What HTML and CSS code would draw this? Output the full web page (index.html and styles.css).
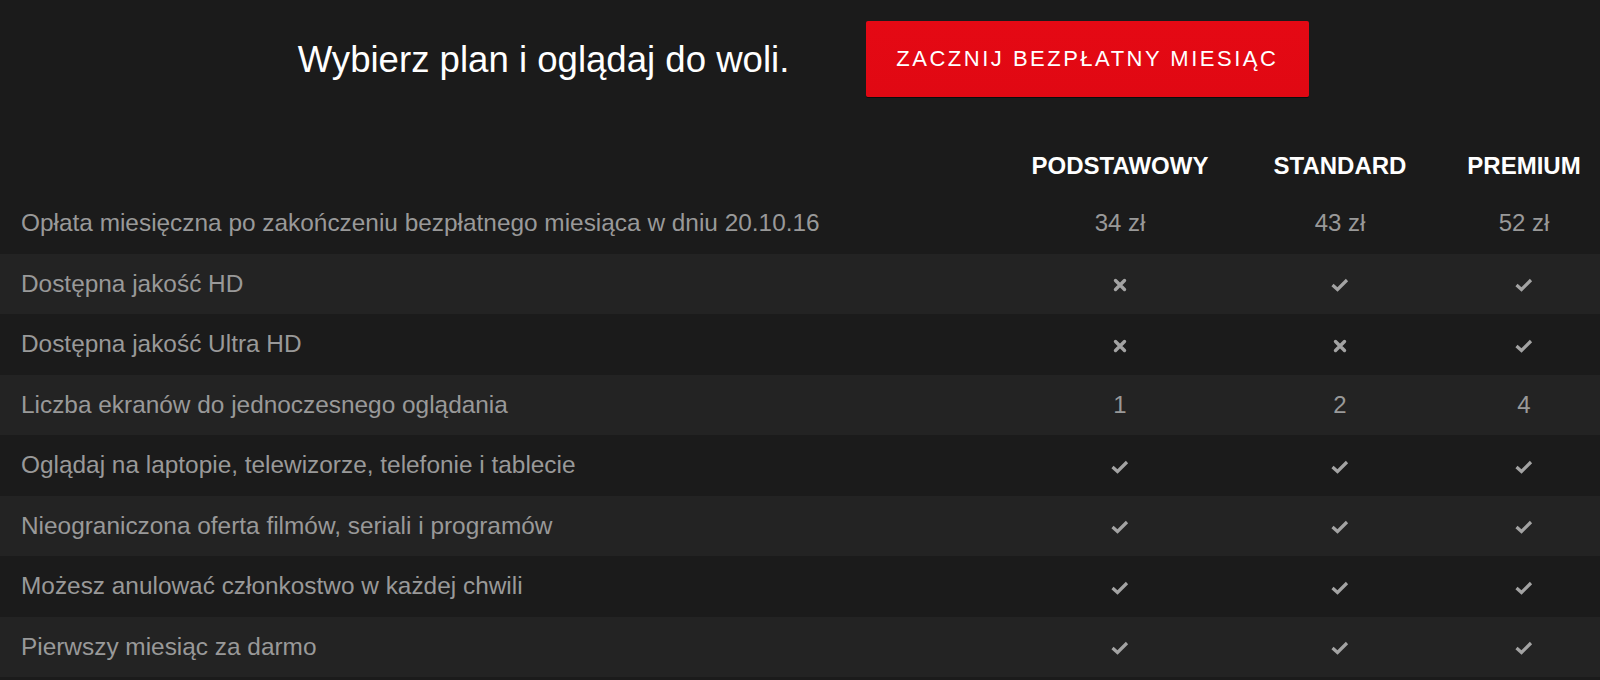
FILE: index.html
```html
<!DOCTYPE html>
<html lang="pl">
<head>
<meta charset="utf-8">
<title>Wybierz plan</title>
<link rel="stylesheet" href="styles.css">
</head>
<body>
<div class="page">
  <header class="hero">
    <h1 class="hero-title">Wybierz plan i oglądaj do woli.</h1>
    <a class="cta" href="#">ZACZNIJ BEZPŁATNY MIESIĄC</a>
  </header>

  <table class="plans">
    <colgroup>
      <col class="col-feature">
      <col class="col-basic">
      <col class="col-standard">
      <col class="col-premium">
    </colgroup>
    <thead>
      <tr class="head-row">
        <th class="feature"></th>
        <th class="plan">PODSTAWOWY</th>
        <th class="plan">STANDARD</th>
        <th class="plan">PREMIUM</th>
      </tr>
    </thead>
    <tbody>
      <tr>
        <td class="feature">Opłata miesięczna po zakończeniu bezpłatnego miesiąca w dniu 20.10.16</td>
        <td class="val">34 zł</td>
        <td class="val">43 zł</td>
        <td class="val">52 zł</td>
      </tr>
      <tr class="alt">
        <td class="feature">Dostępna jakość HD</td>
        <td class="val"><svg class="ico-x" viewBox="0 0 14 14"><path d="M2.5 2.5 L11.5 11.5 M11.5 2.5 L2.5 11.5"/></svg></td>
        <td class="val"><svg class="ico-check" viewBox="0 0 18 14"><path d="M1.5 7 L6.5 11.5 L16 2"/></svg></td>
        <td class="val"><svg class="ico-check" viewBox="0 0 18 14"><path d="M1.5 7 L6.5 11.5 L16 2"/></svg></td>
      </tr>
      <tr>
        <td class="feature">Dostępna jakość Ultra HD</td>
        <td class="val"><svg class="ico-x" viewBox="0 0 14 14"><path d="M2.5 2.5 L11.5 11.5 M11.5 2.5 L2.5 11.5"/></svg></td>
        <td class="val"><svg class="ico-x" viewBox="0 0 14 14"><path d="M2.5 2.5 L11.5 11.5 M11.5 2.5 L2.5 11.5"/></svg></td>
        <td class="val"><svg class="ico-check" viewBox="0 0 18 14"><path d="M1.5 7 L6.5 11.5 L16 2"/></svg></td>
      </tr>
      <tr class="alt">
        <td class="feature">Liczba ekranów do jednoczesnego oglądania</td>
        <td class="val">1</td>
        <td class="val">2</td>
        <td class="val">4</td>
      </tr>
      <tr>
        <td class="feature">Oglądaj na laptopie, telewizorze, telefonie i tablecie</td>
        <td class="val"><svg class="ico-check" viewBox="0 0 18 14"><path d="M1.5 7 L6.5 11.5 L16 2"/></svg></td>
        <td class="val"><svg class="ico-check" viewBox="0 0 18 14"><path d="M1.5 7 L6.5 11.5 L16 2"/></svg></td>
        <td class="val"><svg class="ico-check" viewBox="0 0 18 14"><path d="M1.5 7 L6.5 11.5 L16 2"/></svg></td>
      </tr>
      <tr class="alt">
        <td class="feature">Nieograniczona oferta filmów, seriali i programów</td>
        <td class="val"><svg class="ico-check" viewBox="0 0 18 14"><path d="M1.5 7 L6.5 11.5 L16 2"/></svg></td>
        <td class="val"><svg class="ico-check" viewBox="0 0 18 14"><path d="M1.5 7 L6.5 11.5 L16 2"/></svg></td>
        <td class="val"><svg class="ico-check" viewBox="0 0 18 14"><path d="M1.5 7 L6.5 11.5 L16 2"/></svg></td>
      </tr>
      <tr>
        <td class="feature">Możesz anulować członkostwo w każdej chwili</td>
        <td class="val"><svg class="ico-check" viewBox="0 0 18 14"><path d="M1.5 7 L6.5 11.5 L16 2"/></svg></td>
        <td class="val"><svg class="ico-check" viewBox="0 0 18 14"><path d="M1.5 7 L6.5 11.5 L16 2"/></svg></td>
        <td class="val"><svg class="ico-check" viewBox="0 0 18 14"><path d="M1.5 7 L6.5 11.5 L16 2"/></svg></td>
      </tr>
      <tr class="alt">
        <td class="feature">Pierwszy miesiąc za darmo</td>
        <td class="val"><svg class="ico-check" viewBox="0 0 18 14"><path d="M1.5 7 L6.5 11.5 L16 2"/></svg></td>
        <td class="val"><svg class="ico-check" viewBox="0 0 18 14"><path d="M1.5 7 L6.5 11.5 L16 2"/></svg></td>
        <td class="val"><svg class="ico-check" viewBox="0 0 18 14"><path d="M1.5 7 L6.5 11.5 L16 2"/></svg></td>
      </tr>
    </tbody>
  </table>
</div>
</body>
</html>
```

FILE: styles.css
```css
html, body {
  margin: 0;
  padding: 0;
  background: #1b1b1b;
}

body {
  font-family: "Liberation Sans", Arial, Helvetica, sans-serif;
  color: #999;
  overflow: hidden;
}

.page {
  width: 1600px;
}

.hero {
  display: flex;
  align-items: center;
  justify-content: center;
  gap: 77px;
  padding: 21px 0 0 7px;
  height: 76px;
}

.hero-title {
  margin: 2px 0 0 0;
  font-size: 36.6px;
  font-weight: normal;
  color: #fff;
  line-height: 42px;
}

.cta {
  display: inline-flex;
  align-items: center;
  height: 76px;
  box-sizing: border-box;
  padding: 0 31px 0 30px;
  background: linear-gradient(to bottom, #e50914 0%, #e00813 100%);
  border-radius: 2px;
  box-shadow: 0 1px 0 rgba(0, 0, 0, 0.55);
  color: #fff;
  font-size: 22px;
  letter-spacing: 2.5px;
  text-decoration: none;
  white-space: nowrap;
}

.plans {
  width: 1600px;
  margin-top: 42px;
  border-collapse: collapse;
  table-layout: fixed;
}

.col-basic { width: 224px; }
.col-standard { width: 216px; }
.col-premium { width: 152px; }

.head-row {
  height: 54px;
}

.plan {
  color: #fff;
  font-size: 24px;
  font-weight: bold;
  text-align: center;
  padding: 0;
  vertical-align: middle;
  white-space: nowrap;
}

.plans tbody tr {
  height: 60.5px;
}

.plans tbody tr.alt {
  background: #232323;
}

.feature {
  padding: 0 0 0 21px;
  font-size: 24.4px;
  text-align: left;
  vertical-align: middle;
  white-space: nowrap;
}

.val {
  padding: 0;
  text-align: center;
  vertical-align: middle;
  font-size: 24px;
  color: #999;
}

.ico-check {
  display: inline-block;
  width: 18px;
  height: 14px;
  vertical-align: middle;
  fill: none;
  stroke: #a3a3a3;
  stroke-width: 3.2;
  stroke-linecap: butt;
  stroke-linejoin: miter;
}

.ico-x {
  display: inline-block;
  width: 14px;
  height: 14px;
  vertical-align: middle;
  fill: none;
  stroke: #a3a3a3;
  stroke-width: 3.4;
  stroke-linecap: round;
}
```
